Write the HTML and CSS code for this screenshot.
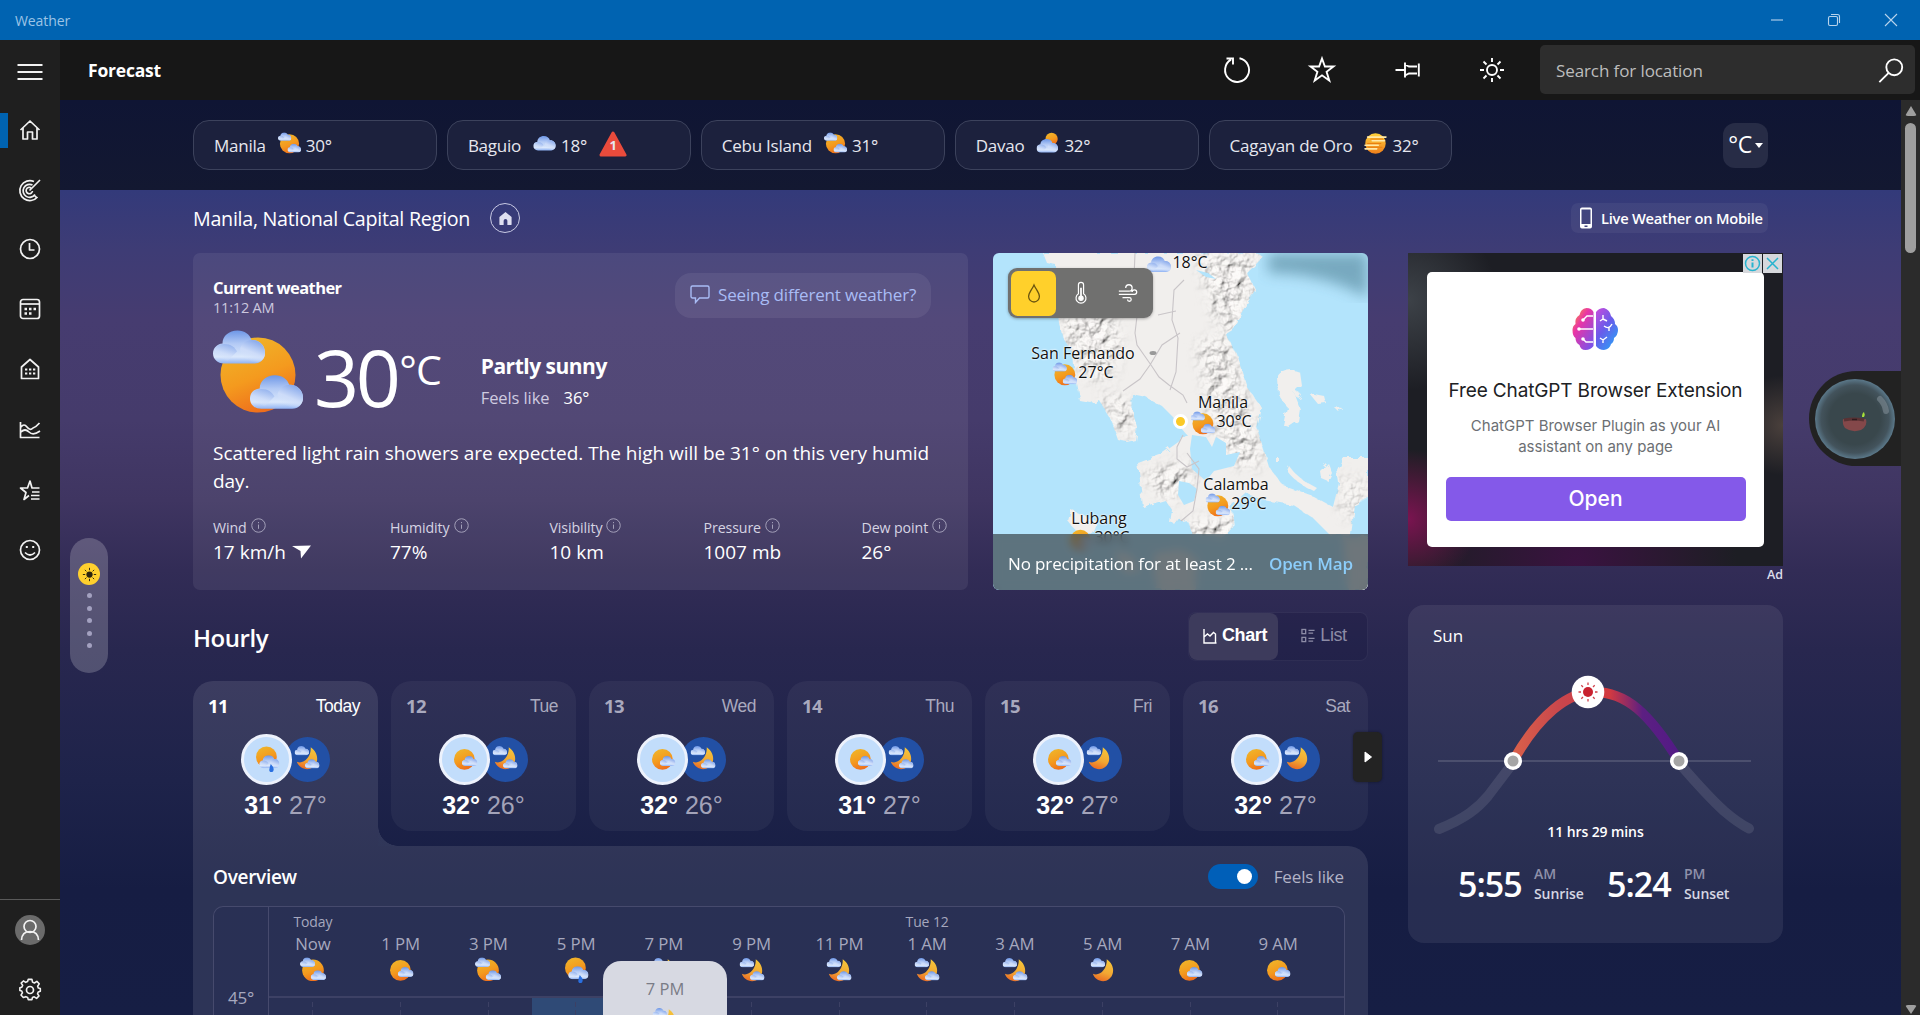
FILE: index.html
```html
<!DOCTYPE html>
<html lang="en">
<head>
<meta charset="utf-8">
<title>Weather</title>
<link rel="stylesheet" href="styles.css">
</head>
<body>
<svg class="defs" aria-hidden="true">
  <defs>
    <linearGradient id="gSun" x1="0.2" y1="0" x2="0.6" y2="1"><stop offset="0" stop-color="#efb62b"/><stop offset="0.55" stop-color="#f49a1e"/><stop offset="1" stop-color="#ee6c1c"/></linearGradient>
    <linearGradient id="gMoon" x1="0.7" y1="0" x2="0.4" y2="1"><stop offset="0" stop-color="#f5c63a"/><stop offset="0.6" stop-color="#f2a733"/><stop offset="1" stop-color="#ea6d25"/></linearGradient>
    <linearGradient id="gCloud" x1="0" y1="0" x2="0" y2="1"><stop offset="0" stop-color="#6d96e6"/><stop offset="0.4" stop-color="#b3caf5"/><stop offset="0.8" stop-color="#dbe8fc"/><stop offset="1" stop-color="#8fb2f3"/></linearGradient>
    <linearGradient id="gLobe" x1="0.7" y1="0" x2="0.3" y2="0.9"><stop offset="0" stop-color="#84a6ea"/><stop offset="0.6" stop-color="#cddcf9"/><stop offset="1" stop-color="#d6e4fb" stop-opacity="0"/></linearGradient>
    <linearGradient id="gHaze" x1="0" y1="0" x2="0" y2="1"><stop offset="0" stop-color="#ffd23c"/><stop offset="1" stop-color="#ef7f1b"/></linearGradient>
    <linearGradient id="gBrainL" x1="0" y1="0" x2="0.8" y2="1"><stop offset="0" stop-color="#ffa12b"/><stop offset="0.4" stop-color="#e935a6"/><stop offset="1" stop-color="#7c52e8"/></linearGradient>
    <linearGradient id="gBrainR" x1="0" y1="0" x2="0.7" y2="1"><stop offset="0" stop-color="#c94bdc"/><stop offset="0.5" stop-color="#6a5bea"/><stop offset="1" stop-color="#2f9bf5"/></linearGradient>
    <linearGradient id="gArc" gradientUnits="userSpaceOnUse" x1="105" y1="0" x2="271" y2="0"><stop offset="0" stop-color="#d9604a"/><stop offset="0.3" stop-color="#c9454c"/><stop offset="0.58" stop-color="#d33a40"/><stop offset="0.78" stop-color="#5c1f82"/><stop offset="1" stop-color="#521a86"/></linearGradient>
  </defs>
  <symbol id="cloud" viewBox="0 0 52 33">
    <path fill="url(#gCloud)" d="M11 33C4.500 33 0 28.500 0 23C0 17.500 4 13.500 9.500 13C9.500 5.500 16 0 24.500 0C31.500 0 37 4 38.500 9.500C46.500 9 52 15 52 22.500C52 28.500 47.500 33 41.500 33Z"/>
    <path fill="url(#gLobe)" d="M27 20C27 14 33 9.500 39 9.500C46.500 9.500 52 15.500 52 22C52 28 48 32 42 32H34Z"/>
    <path fill="url(#gLobe)" opacity=".7" d="M1 22C1 17 5 13.500 11 13.500C18 13.500 22 17 24 21L14 31Z"/>
  </symbol>
  <symbol id="partly" viewBox="0 0 90 90">
    <circle cx="45" cy="46" r="37.500" fill="url(#gSun)"/>
    <use href="#cloud" x="0" y="1" width="52" height="34"/>
    <use href="#cloud" x="37" y="46" width="53" height="34"/>
  </symbol>
  <symbol id="mostly" viewBox="0 0 90 90">
    <circle cx="43" cy="46" r="36" fill="url(#gSun)"/>
    <use href="#cloud" x="34" y="34" width="54" height="36"/>
  </symbol>
  <symbol id="rain" viewBox="0 0 90 90">
    <circle cx="43" cy="38" r="36" fill="url(#gSun)"/>
    <use href="#cloud" x="18" y="32" width="70" height="45"/>
    <path d="M58 62q15 15 8 26q-9 7-13-3q-1-7 5-23z" fill="#2a6fe0"/>
  </symbol>
  <symbol id="moon" viewBox="0 0 90 90">
    <path fill="url(#gMoon)" d="M58 8C88 28 88 70 56 82C36 88 15 76 10 58C32 68 60 44 58 8Z"/>
    <use href="#cloud" x="2" y="3" width="50" height="33"/>
    <use href="#cloud" x="38" y="48" width="50" height="34"/>
  </symbol>
  <symbol id="moon1" viewBox="0 0 90 90">
    <path fill="url(#gMoon)" d="M58 8C88 28 88 70 56 82C36 88 15 76 10 58C32 68 60 44 58 8Z"/>
    <use href="#cloud" x="2" y="3" width="50" height="33"/>
  </symbol>
  <symbol id="cloudy" viewBox="0 0 90 90"><use href="#cloud" x="1" y="14" width="88" height="60"/></symbol>
  <symbol id="mcloud" viewBox="0 0 90 90">
    <circle cx="61" cy="27" r="24" fill="url(#gSun)"/>
    <use href="#cloud" x="2" y="26" width="84" height="56"/>
  </symbol>
  <symbol id="haze" viewBox="0 0 90 90">
    <circle cx="45" cy="45" r="40" fill="url(#gHaze)"/>
    <path d="M14 20H86M32 34H80M4 52H56M4 66H50" stroke="#ffe9a8" stroke-width="6" stroke-linecap="round"/>
    <path d="M26 27H74M14 45H66M18 60H70" stroke="#e87f10" stroke-width="4" stroke-linecap="round"/>
  </symbol>
  <symbol id="info" viewBox="0 0 16 16"><circle cx="8" cy="8" r="7.200" fill="none" stroke="currentColor"/><path d="M8 7v4.500M8 4.300v1.200" stroke="currentColor"/></symbol>
  <symbol id="rays" viewBox="0 0 24 24"><g stroke="currentColor" stroke-width="1.500" stroke-linecap="round"><path d="M12 2v2.500M12 19.500V22M2 12h2.500M19.500 12H22M5 5l1.600 1.600M17.400 17.400 19 19M5 19l1.600-1.600M17.400 6.600 19 5"/></g><circle cx="12" cy="12" r="5" fill="currentColor"/></symbol>
</svg>

<header class="titlebar">
  <span class="app-name">Weather</span>
  <div class="win-controls">
    <svg viewBox="0 0 14 14"><path d="M1 7h12"/></svg>
    <svg viewBox="0 0 14 14"><rect x="1.500" y="3.500" width="9" height="9" rx="1.500"/><path d="M4 1.500h6.500a2 2 0 0 1 2 2V10"/></svg>
    <svg viewBox="0 0 14 14"><path d="M1 1l12 12M13 1L1 13"/></svg>
  </div>
</header>

<div class="shell">
  <nav class="rail">
    <a class="rail-item menu"><svg viewBox="0 0 26 26"><path d="M.5 6h25M.5 13h25M.5 20h25" stroke-width="2"/></svg></a>
    <a class="rail-item active"><svg viewBox="0 0 26 26"><path d="M3.500 13 13 4l9.500 9M6 11v11h4.500v-7h5v7H20V11"/></svg></a>
    <a class="rail-item"><svg viewBox="0 0 26 26"><path d="M17 4.500A10 10 0 1 0 20.500 20M15.500 8A6.500 6.500 0 1 0 18 17.500M14 10.800A3.200 3.200 0 1 0 15.500 14M12.500 13.500 23 3M20 21l-3-3"/></svg></a>
    <a class="rail-item lift"><svg viewBox="0 0 26 26"><circle cx="13" cy="13" r="9.500"/><path d="M12.500 7v7h5"/></svg></a>
    <a class="rail-item lift"><svg viewBox="0 0 26 26"><rect x="3.500" y="3.500" width="19" height="19" rx="2.500"/><path d="M3.500 8h19"/><path d="M7.500 13h2.500M12 13h2.500M16.500 13h2.500M7.500 17.500h2.500M12 17.500h2.500" stroke-width="2.500"/></svg></a>
    <a class="rail-item lift"><svg viewBox="0 0 26 26"><path d="M4.500 22.500V11L13 3.500l8.500 7.500v11.500z"/><path d="M8 13.500h2.300M12 13.500h2.300M16 13.500h2.300M8 17.500h2.300M12 17.500h2.300M16 17.500h2.300" stroke-width="2.200"/></svg></a>
    <a class="rail-item"><svg viewBox="0 0 26 26"><path d="M3.500 5v15.500h19M4 10q3-4 6 0t6 1q3-1 6.500-5M4 15q4-4 8 0t11-1"/></svg></a>
    <a class="rail-item"><svg viewBox="0 0 26 26"><path d="M22.500 11H15L13 4l-2.500 7H3.500l5.500 4.500-2 7 5-4M15 15h7.500M14 18.500h8.500M14 22h8.500"/></svg></a>
    <a class="rail-item"><svg viewBox="0 0 26 26"><circle cx="13" cy="13" r="9.500"/><path d="M8 15.500q5 5 10 0"/><path d="M8.800 10h2M15.200 10h2" stroke-width="2.200"/></svg></a>
    <div class="rail-foot">
      <a class="rail-item"><span class="avatar"><svg viewBox="0 0 30 30"><circle cx="15" cy="11.500" r="6"/><path d="M6.500 25q.5-8.500 8.500-8.500t8.500 8.500"/></svg></span></a>
      <a class="rail-item"><svg viewBox="0 0 26 26"><path d="M11 3.500h4l.6 3 2 .9 2.700-1.700 2.500 2.600-1.700 2.600.8 2 2.100.5v3l-2.200.6-.8 2 1.600 2.300-2.600 2.600-2.500-1.600-2 .8-.5 2.200h-4l-.6-2.300-2-.9L5.700 23 3.200 20.400l1.600-2.500-.8-1.900-2-.5v-3l2.100-.6.9-2L3.400 7.600l2.400-2.400 2.500 1.500 2-.8z" transform="translate(1 -.9) scale(.93)"/><circle cx="13" cy="13" r="3.500"/></svg></a>
    </div>
  </nav>

  <div class="body">
    <div class="cmdbar">
      <h1>Forecast</h1>
      <div class="cmds">
        <svg viewBox="0 0 30 30"><path d="M17.500 3.200A12 12 0 1 1 9 4.600M4.500 3.500h6.500v6"/></svg>
        <svg viewBox="0 0 30 30"><path d="M15 3.500l2.900 8H26.500l-6.900 5.300 2.700 8.700L15 20.300 7.700 25.500l2.700-8.700L3.500 11.500h8.600z"/></svg>
        <svg viewBox="0 0 30 30"><path d="M2.500 15H12M12 7.500v15M12 9.500l4 2h8M12 20.500l4-2h8M25.800 8.500v13" transform="translate(1 0)"/></svg>
        <svg viewBox="0 0 30 30"><circle cx="15" cy="15" r="5"/><path d="M15 3v4M15 23v4M3 15h4M23 15h4M6.500 6.500l3 3M20.500 20.500l3 3M6.500 23.500l3-3M20.500 9.500l3-3"/></svg>
      </div>
      <div class="search"><span>Search for location</span><svg viewBox="0 0 30 30"><circle cx="18.500" cy="11" r="8.500"/><path d="M12.500 17 2.500 27"/></svg></div>
    </div>

    <div class="viewport">
      <div class="page">
        <div class="cities">
          <div class="chip"><span>Manila</span><svg><use href="#partly"/></svg><b>30°</b></div>
          <div class="chip"><span>Baguio</span><svg><use href="#cloudy"/></svg><b>18°</b><i class="alert"><svg viewBox="0 0 28 26"><path d="M14 2 26 24H2Z" fill="#e94b3c" stroke="#e94b3c" stroke-width="3" stroke-linejoin="round"/></svg><em>1</em></i></div>
          <div class="chip"><span>Cebu Island</span><svg><use href="#partly"/></svg><b>31°</b></div>
          <div class="chip"><span>Davao</span><svg><use href="#mcloud"/></svg><b>32°</b></div>
          <div class="chip"><span>Cagayan de Oro</span><svg><use href="#haze"/></svg><b>32°</b></div>
          <div class="unit">°C<svg viewBox="0 0 8 6"><path d="M0 0h8L4 5z" fill="#fff"/></svg></div>
        </div>

        <div class="place">
          <span class="place-name">Manila, National Capital Region</span>
          <span class="home-ring"><svg viewBox="0 0 16 16"><path d="M8 1 1.500 6.500V14a1 1 0 0 0 1 1H6v-4.500a2 2 0 0 1 4 0V15h3.500a1 1 0 0 0 1-1V6.500z" fill="#dfdff0"/></svg></span>
          <a class="mobile"><svg viewBox="0 0 14 22"><path fill="#fff" fill-rule="evenodd" d="M3 .5h8A2 2 0 0 1 13 2.500v17a2 2 0 0 1-2 2H3a2 2 0 0 1-2-2v-17A2 2 0 0 1 3 .5zM2.500 2.500v14.500h9V2.500zM5.500 18.500v1.500h3v-1.500z"/></svg>Live Weather on Mobile</a>
        </div>

        <div class="columns">
          <main class="left">
            <div class="top-row">
              <section class="current">
                <div class="cur-head">
                  <div><h2>Current weather</h2><p>11:12 AM</p></div>
                  <a class="feedback"><svg viewBox="0 0 20 19"><path d="M2.500 1h15A1.500 1.500 0 0 1 19 2.500v9a1.500 1.500 0 0 1-1.500 1.500H9.500L5.500 17.500V13h-3A1.500 1.500 0 0 1 1 11.500v-9A1.500 1.500 0 0 1 2.500 1z"/></svg><span>Seeing different weather?</span></a>
                </div>
                <div class="cur-main">
                  <svg class="big-icon"><use href="#partly"/></svg>
                  <span class="temp">30</span><span class="deg">°C</span>
                  <div class="cond"><strong>Partly sunny</strong><p>Feels like <b>36°</b></p></div>
                </div>
                <p class="summary">Scattered light rain showers are expected. The high will be 31° on this very humid day.</p>
                <div class="metrics">
                  <div><label>Wind<svg><use href="#info"/></svg></label><b>17 km/h<svg class="wind" viewBox="0 0 20 14"><path d="M0 1 19 .5 9 13.500 8.500 6z" fill="#fff"/></svg></b></div>
                  <div><label>Humidity<svg><use href="#info"/></svg></label><b>77%</b></div>
                  <div><label>Visibility<svg><use href="#info"/></svg></label><b>10 km</b></div>
                  <div><label>Pressure<svg><use href="#info"/></svg></label><b>1007 mb</b></div>
                  <div><label>Dew point<svg><use href="#info"/></svg></label><b>26°</b></div>
                </div>
              </section>

              <section class="map">
                <svg class="terrain" viewBox="0 0 375 337">
                  <defs>
                    <filter id="relief" x="0" y="0" width="100%" height="100%">
                      <feTurbulence type="fractalNoise" baseFrequency="0.09" numOctaves="4" seed="8" result="n"/>
                      <feDiffuseLighting in="n" surfaceScale="6" diffuseConstant="1.140" lighting-color="#f4f2f0"><feDistantLight azimuth="225" elevation="58"/></feDiffuseLighting>
                    </filter>
                    <filter id="soft"><feGaussianBlur stdDeviation="7"/></filter>
                    <filter id="edge" x="-5%" y="-5%" width="110%" height="110%"><feTurbulence type="fractalNoise" baseFrequency="0.120" numOctaves="2" seed="3"/><feDisplacementMap in="SourceGraphic" scale="7"/></filter>
                    <clipPath id="land"><path d="M50 0L54 10L63 12L64 50L66 70L70 85L80 100L82 125L87 148L98 150L106 147L117 165L121 175L125 187L134 189L142 187L144 174L139 157L140 142L154 145L170 154L180 164L187 174L194 182L184 190L167 202L145 210L147 227L150 254L162 250L172 247L179 257L177 270L194 267L200 282L230 284L242 272L238 253L252 240L270 247L300 252L320 265L337 282H358L362 252L375 245V204L350 204L344 217L346 230L340 254L320 243L290 232L276 214L264 175L269 155L254 134L243 100L232 80L240 75L250 57L262 37L254 20L270 4L264 0Z"/></clipPath>
                    <mask id="hills"><g fill="#fff" filter="url(#soft)"><path d="M68 40h40l20 45-10 40-25 0-22-45z"/><path d="M205 0h60l-8 50-15 35-20-20z"/><path d="M205 90l30-8 20 70 15 60-30 0-20-40z"/><path d="M108 140l30 10 5 35-20-10z"/><path d="M150 220l40-10 15 15-30 25z"/><path d="M190 270l60-10 20 40-60 10z"/><path d="M345 225h30v40h-25z" opacity=".6"/></g></mask>
                  </defs>
                  <rect width="375" height="337" fill="#b3e4fc"/>
                  <g fill="#f1efed" filter="url(#edge)">
                    <path d="M50 0L54 10L63 12L64 50L66 70L70 85L80 100L82 125L87 148L98 150L106 147L117 165L121 175L125 187L134 189L142 187L144 174L139 157L140 142L154 145L170 154L180 164L187 174L194 182L184 190L167 202L145 210L147 227L150 254L162 250L172 247L179 257L177 270L194 267L200 282L230 284L242 272L238 253L252 240L270 247L300 252L320 265L337 282H358L362 252L375 245V204L350 204L344 217L346 230L340 254L320 243L290 232L276 214L264 175L269 155L254 134L243 100L232 80L240 75L250 57L262 37L254 20L270 4L264 0Z"/>
                    <path d="M285 125q8-12 22-6l2 14-8 8 6 15-2 12-9 6-6-2 4-18-8-12z"/>
                    <path d="M302 138l6 3-2 4-5-3zM316 140l15 3 2 7-8 1zM341 154l8 1-3 4z"/>
                    <path d="M296 213q8 12 28 22l-3 3q-18-8-27-20zM327 218l8-8 4 10-4 8-7-3zM283 205h4v4h-4z"/>
                    <path d="M78 257l12 5 16 8-5 12-18-4-8-10zM120 298l18 4 10 16-16 2zM160 300l30-4 14 10v31h-40zM350 284h25v53h-20z"/>
                  </g>
                  <g clip-path="url(#land)"><g mask="url(#hills)"><rect width="375" height="290" filter="url(#relief)" opacity=".75"/></g></g>
                  <g fill="#b3e4fc"><path d="M199 182l14 2 6 10 4-10 10 6 0 12 14-3-6 14-20 5-8 10-14-12-2-20z"/><path d="M186 228l10 2 8 6-3 12-10 4-6-10z"/><path d="M203 17l12 3 8 6-10-2z"/></g>
                  <g fill="none" stroke="#c9c5c8" stroke-width="1.100"><path d="M142 0l-1 25 4 30-3 25 2 12 14 20 8 12 10 8 14 10 4 8M191 27l-10 10-2 30 6 18-2 34-6 18M187 80l-18 12-12 20-10 14-17 12M183 58l-18 4M190 182l-6 12 0 12 10 8 12-6M194 200l12 16-2 20-4 22-12 10"/></g>
                  <ellipse cx="160" cy="100" rx="3.500" ry="2" fill="#999"/>
                  <path d="M275 0H375V45Q330 20 275 20Z" fill="#3e6f84" opacity=".5" filter="url(#soft)"/>
                </svg>
                <div class="pin p0"><svg><use href="#cloudy"/></svg>18°C</div>
                <div class="pin p1"><span>San Fernando</span><div><svg><use href="#partly"/></svg>27°C</div></div>
                <div class="pin p2"><span>Manila</span><div><svg><use href="#partly"/></svg>30°C</div></div>
                <div class="pin p3"><span>Calamba</span><div><svg><use href="#partly"/></svg>29°C</div></div>
                <div class="pin p4"><span>Lubang</span><div><svg><use href="#mostly"/></svg>30°C</div></div>
                <i class="here"></i>
                <div class="layers">
                  <span class="on"><svg viewBox="0 0 20 24"><path d="M10 3C8 8 4 11.500 4 16a6 6 0 0 0 12 0C16 11.500 12 8 10 3z"/></svg></span>
                  <span><svg viewBox="0 0 14 28"><path d="M4 15V4.500a3 3 0 0 1 6 0V15a5.800 5.800 0 1 1-6 0z"/><path d="M7 8v10" stroke-width="2"/><circle cx="7" cy="20" r="2.500" fill="#fff"/></svg></span>
                  <span><svg viewBox="0 0 24 20"><path d="M2 8h11a3.500 3.500 0 1 0-3.500-3.500M2 11.500h17a2.500 2.500 0 1 0-2.500-2.500M6 15h7.500a2 2 0 1 1-2 2"/></svg></span>
                </div>
                <div class="map-foot"><span>No precipitation for at least 2 ...</span><a>Open Map</a></div>
              </section>
            </div>

            <div class="hourly-head">
              <h2>Hourly</h2>
              <div class="switch">
                <span class="on"><svg viewBox="0 0 14 16"><path d="M1 1v14h12.500M1 9l3.500-3 2.500 2 3.500-3.500 2 1.500v9"/></svg>Chart</span>
                <span><svg viewBox="0 0 15 16"><rect x="1" y="1" width="4" height="4.500"/><rect x="1" y="9.500" width="4" height="4.500"/><path d="M8 2h6.500M8 5h5M8 10.500h6.500M8 13.500h5"/></svg>List</span>
              </div>
            </div>

            <div class="days">
              <div class="day today"><div class="d"><b>11</b><span>Today</span></div><div class="ic"><i><svg><use href="#rain"/></svg></i><i class="n"><svg><use href="#moon"/></svg></i></div><div class="t"><b>31°</b> 27°</div></div>
              <div class="day"><div class="d"><b>12</b><span>Tue</span></div><div class="ic"><i><svg><use href="#mostly"/></svg></i><i class="n"><svg><use href="#moon"/></svg></i></div><div class="t"><b>32°</b> 26°</div></div>
              <div class="day"><div class="d"><b>13</b><span>Wed</span></div><div class="ic"><i><svg><use href="#mostly"/></svg></i><i class="n"><svg><use href="#moon"/></svg></i></div><div class="t"><b>32°</b> 26°</div></div>
              <div class="day"><div class="d"><b>14</b><span>Thu</span></div><div class="ic"><i><svg><use href="#mostly"/></svg></i><i class="n"><svg><use href="#moon"/></svg></i></div><div class="t"><b>31°</b> 27°</div></div>
              <div class="day"><div class="d"><b>15</b><span>Fri</span></div><div class="ic"><i><svg><use href="#mostly"/></svg></i><i class="n"><svg><use href="#moon1"/></svg></i></div><div class="t"><b>32°</b> 27°</div></div>
              <div class="day"><div class="d"><b>16</b><span>Sat</span></div><div class="ic"><i><svg><use href="#mostly"/></svg></i><i class="n"><svg><use href="#moon1"/></svg></i></div><div class="t"><b>32°</b> 27°</div></div>
              <a class="next"><svg viewBox="0 0 8 12"><path d="M1 1v10l6.500-5z" fill="#fff" stroke="#fff" stroke-linejoin="round"/></svg></a>
            </div>

            <section class="overview">
              <div class="ov-head"><h3>Overview</h3><i class="toggle"></i><span>Feels like</span></div>
              <div class="chart">
                <div class="axis">45°</div>
                <div class="plot">
                  <div class="hours">
                    <div><small>Today</small><span>Now</span><svg><use href="#partly"/></svg></div>
                    <div><small></small><span>1 PM</span><svg><use href="#mostly"/></svg></div>
                    <div><small></small><span>3 PM</span><svg><use href="#partly"/></svg></div>
                    <div><small></small><span>5 PM</span><svg><use href="#rain"/></svg></div>
                    <div><small></small><span>7 PM</span><svg><use href="#moon"/></svg></div>
                    <div><small></small><span>9 PM</span><svg><use href="#moon"/></svg></div>
                    <div><small></small><span>11 PM</span><svg><use href="#moon"/></svg></div>
                    <div><small>Tue 12</small><span>1 AM</span><svg><use href="#moon"/></svg></div>
                    <div><small></small><span>3 AM</span><svg><use href="#moon"/></svg></div>
                    <div><small></small><span>5 AM</span><svg><use href="#moon1"/></svg></div>
                    <div><small></small><span>7 AM</span><svg><use href="#mostly"/></svg></div>
                    <div><small></small><span>9 AM</span><svg><use href="#mostly"/></svg></div>
                  </div>
                  <div class="grid"><i></i><i></i><i></i><i class="rainy"></i><i class="rainy"></i><i></i><i></i><i></i><i></i><i></i><i></i><i></i></div>
                </div>
                <div class="tip">7 PM<svg><use href="#moon"/></svg></div>
              </div>
            </section>
          </main>

          <aside class="right">
            <div class="ad">
              <div class="ad-ctl"><svg viewBox="0 0 19 19"><circle cx="9.500" cy="9.500" r="7"/><path d="M9.500 8.500v5M9.500 5.200v1.800" stroke-width="2"/></svg><svg viewBox="0 0 19 19"><path d="M4 4l11 11M15 4 4 15"/></svg></div>
              <div class="ad-card">
                <svg class="brain" viewBox="0 0 46 42"><path fill="url(#gBrainL)" d="M21.500 4v34q-3 4-8 4-5 0-6-5-4-2-4-7-3-2-3-8 0-4 3-6-1-6 4-9 1-6 7-7 5 0 7 4z"/><path fill="url(#gBrainR)" d="M24 4v34q3 4 8 4 6-1 7-6 3-2 3-6 4-3 4-8 0-4-3-6 0-5-4-8-1-6-7-8-5 0-8 4z"/><g fill="none" stroke="#fff" stroke-width="1.400"><path d="M21 8h-6l-4 4M21 21H7M21 34h-7l-3-3M28 13l3-2V7M31 11l4 2M32 18q5 4 8-2M37 19v4M28 30l3 2 4-3M31 32v3"/></g><g fill="#fff"><circle cx="11" cy="12" r="1.800"/><circle cx="7" cy="21" r="1.800"/><circle cx="11" cy="31" r="1.800"/></g></svg>
                <h4>Free ChatGPT Browser Extension</h4>
                <p>ChatGPT Browser Plugin as your AI assistant on any page</p>
                <a class="open">Open</a>
              </div>
            </div>
            <div class="ad-label">Ad</div>
            <section class="sun">
              <h3>Sun</h3>
              <svg class="arc" viewBox="0 0 375 170">
                <path d="M30 108H343" stroke="#fff" stroke-opacity=".28"/>
                <g fill="none" stroke-width="10" stroke-linecap="round"><path d="M31 176C58 165 70 155 80 143L105 110M271 110C290 132 305 148 316 158Q330 170 341 175.500" stroke="#fff" stroke-opacity=".1"/><path d="M105 108C131 62 160 39 186 39C218 39 241 60 271 108" stroke="url(#gArc)" stroke-linecap="butt"/></g>
                <circle cx="105" cy="108" r="9" fill="#fff"/><circle cx="105" cy="108" r="5.500" fill="#a5a5a5"/>
                <circle cx="271" cy="108" r="9" fill="#fff"/><circle cx="271" cy="108" r="5.500" fill="#a5a5a5"/>
                <circle cx="180" cy="39" r="16.300" fill="#fff"/>
                <circle cx="180" cy="39" r="5" fill="#c9222f"/><g stroke="#d0404a" stroke-width="1.300"><path d="M180 29.500v2.500M180 46v2.500M170.500 39h2.500M187 39h2.500M173.300 32.300l1.700 1.700M185 44l1.700 1.700M173.300 45.700 175 44M185 34l1.700-1.700"/></g>
              </svg>
              <p class="len">11 hrs 29 mins</p>
              <div class="times">
                <b>5:55</b><div><span>AM</span>Sunrise</div>
                <b class="set">5:24</b><div><span>PM</span>Sunset</div>
              </div>
            </section>
          </aside>
        </div>

        <div class="dots"><span><svg><use href="#rays"/></svg></span><i></i><i></i><i></i><i></i><i></i></div>
        <div class="bean"><div class="orb"><svg viewBox="0 0 80 80"><path d="M65 20q5 5 6 12" stroke="#7e8c94" stroke-width="6" stroke-linecap="round" fill="none" opacity=".6"/><path d="M28 40q12 2 23 0q2 7-5 11q-9 3-16-2q-3-4-2-9z" fill="#84484a"/><path d="M29 41q10-2 20 0" stroke="#5a3234" stroke-width="3" fill="none"/><path d="M37 40.500h5" stroke="#301a1e" stroke-width="1.500"/><path d="M47 38q0-4 2-5q1.500 3 0 5z" fill="#a7e23a"/></svg></div></div>
      </div>
      <div class="scroll"><i class="up"></i><i class="thumb"></i><i class="down"></i></div>
    </div>
  </div>
</div>
</body>
</html>
```
FILE: styles.css
```css
* { box-sizing: border-box; margin: 0; padding: 0; }
body { width: 1920px; height: 1015px; overflow: hidden; font-family: "Open Sans", "Noto Sans", sans-serif; color: #fff; background: #161d43; display: flex; flex-direction: column; }
h1, h2, h3, h4, b, strong { font-weight: 600; }
i, em { font-style: normal; }
svg { display: block; flex: none; }
.defs { position: absolute; width: 0; height: 0; }

.titlebar { height: 40px; flex: none; background: #0063b1; display: flex; align-items: center; justify-content: space-between; padding: 0 22px 0 15px; }
.app-name { font-size: 14px; color: #9cc4e6; letter-spacing: -.1px; }
.win-controls { display: flex; gap: 43px; }
.win-controls svg { width: 14px; height: 14px; fill: none; stroke: #b8d4ec; stroke-width: 1.1; }

.shell { flex: 1; min-height: 0; display: flex; }
.rail { width: 60px; flex: none; background: #1f1f1f; display: flex; flex-direction: column; padding-top: 2px; }
.rail-item { height: 60px; display: flex; align-items: center; justify-content: center; position: relative; }
.rail-item.menu { height: 58px; padding-top: 2px; }
.rail-item.lift { padding-bottom: 3px; }
.rail-item svg { width: 26px; height: 26px; fill: none; stroke: #f2f2f2; stroke-width: 1.7; stroke-linejoin: round; }
.rail-item.active::before { content: ""; position: absolute; left: 0; top: 13px; width: 8px; height: 35px; background: #0063b1; }
.rail-foot { margin-top: auto; height: 116px; border-top: 1px solid #5a5a5a; }
.rail-item .avatar { width: 30px; height: 30px; border-radius: 50%; background: #6b6b6b; }
.rail-item .avatar svg { width: 30px; height: 30px; }

.body { flex: 1; min-width: 0; display: flex; flex-direction: column; }
.cmdbar { height: 60px; flex: none; background: #171717; display: flex; align-items: center; padding: 0 5px 0 28px; }
.cmdbar h1 { font-size: 17.500px; font-weight: 700; letter-spacing: -.2px; }
.cmds { margin-left: auto; display: flex; gap: 55px; margin-right: 33px; }
.cmds svg { width: 30px; height: 30px; fill: none; stroke: #fff; stroke-width: 1.9; }
.search { width: 375px; height: 49px; margin-top: -2px; background: #2d2d2d; border-radius: 5px; display: flex; align-items: center; justify-content: space-between; padding: 3px 10px 0 16px; color: #bdbdbd; font-size: 17px; letter-spacing: -.1px; }
.search svg { width: 28px; height: 30px; fill: none; stroke: #fff; stroke-width: 2; }

.viewport { flex: 1; min-height: 0; display: flex; }
.page { position: relative; flex: 1; min-width: 0; overflow: hidden; background: linear-gradient(#333a7a 90px, #3e3c75 150px, #463c70 220px, #453b6b 320px, #3f3561 400px, #322c56 470px, #28274f 550px, #1e234a 680px, #161d43 790px, #161e44); }
.cities { height: 90px; padding: 20px 133px; background: linear-gradient(#0f1534, #131831); display: flex; gap: 10px; }
.chip { width: 243.900px; height: 50px; border: 1px solid #3c425c; border-radius: 16px; background: #1c213d; display: flex; align-items: center; padding: 1px 20px 0; font-size: 17px; letter-spacing: -.25px; color: #e6e7ef; }
.chip b { font-weight: 400; }
.chip > svg { width: 23px; height: 23px; margin: -4px 5px 0 12px; }
.alert { position: relative; width: 28px; height: 26px; margin: -4px 0 0 12px; }
.alert svg { width: 28px; height: 26px; }
.alert em { position: absolute; left: 0; right: 0; top: 5px; text-align: center; font-size: 13px; line-height: 18px; font-weight: 700; }
.unit { width: 45px; height: 45px; margin: 3px 0 0 auto; border-radius: 12px; background: #272c46; display: flex; align-items: center; justify-content: center; gap: 3px; font-size: 23px; letter-spacing: -.5px; padding-bottom: 4px; }
.unit svg { width: 8px; height: 6px; margin-top: 5px; }

.place { height: 63px; padding: 0 133px 7px; display: flex; align-items: center; }
.place-name { font-size: 19.700px; letter-spacing: -.28px; }
.home-ring { width: 30px; height: 30px; border: 1.500px solid #c9cae4; border-radius: 50%; margin-left: 20px; display: flex; align-items: center; justify-content: center; }
.home-ring svg { width: 15px; height: 15px; }
.mobile { margin-left: auto; width: 197px; height: 30px; border-radius: 7px; background: rgba(255,255,255,.05); display: flex; align-items: center; gap: 8px; padding-left: 8px; font-size: 14.700px; font-weight: 600; letter-spacing: -.25px; white-space: nowrap; }
.mobile svg { width: 14px; height: 22px; }

.columns { display: flex; gap: 40px; padding-left: 133px; }
.left { width: 1175px; flex: none; }
.right { width: 375px; flex: none; }
.top-row { display: flex; gap: 25px; height: 337px; }
.current { width: 775px; border-radius: 7px; background: rgba(255,255,255,.07); padding: 20px 20px 0; }
.cur-head { display: flex; justify-content: space-between; height: 50px; }
.cur-head h2 { font-size: 16.500px; font-weight: 700; letter-spacing: -.6px; line-height: 20px; margin-top: 5px; }
.cur-head p { font-size: 14.500px; line-height: 20px; color: #cbc7de; letter-spacing: -.2px; }
.feedback { width: 256px; height: 45px; margin-right: 17px; border-radius: 16px; background: rgba(255,255,255,.07); color: #a9bcf5; display: flex; align-items: center; padding: 0 0 2px 15px; gap: 8px; font-size: 17px; letter-spacing: -.17px; white-space: nowrap; }
.feedback svg { width: 20px; height: 19px; fill: none; stroke: #a9bcf5; stroke-width: 1.400; }
.cur-main { display: flex; height: 110px; }
.big-icon { width: 90px; height: 90px; margin-top: 6px; }
.temp { font-size: 79px; line-height: 108px; letter-spacing: -3.500px; margin-left: 11px; }
.deg { font-size: 41px; line-height: 56px; letter-spacing: -1px; margin: 18px 0 0 2px; }
.cond { margin-left: 40px; }
.cond strong { display: block; font-size: 21px; font-weight: 700; letter-spacing: -.5px; line-height: 28px; margin-top: 29px; }
.cond p { font-size: 16.500px; line-height: 22px; margin-top: 7px; color: #cfcbe0; letter-spacing: -.1px; }
.cond p b { font-weight: 400; color: #fff; margin-left: 10px; }
.summary { font-size: 19px; letter-spacing: -.03px; line-height: 28px; margin-top: 6px; height: 74px; }
.metrics { display: grid; grid-template-columns: 177px 159.500px 154px 158px 1fr; margin-right: -20px; }
.metrics label { display: flex; gap: 4px; font-size: 14.200px; letter-spacing: -.1px; line-height: 20px; margin-top: 5px; color: #d6d4e3; white-space: nowrap; }
.metrics label svg { width: 15px; height: 15px; color: #a9a5be; }
.metrics b { display: flex; align-items: center; gap: 6px; font-size: 19px; line-height: 28px; margin-top: 0; font-weight: 400; }
.metrics .wind { width: 20px; height: 14px; }

.map { position: relative; width: 375px; height: 337px; border-radius: 6px; overflow: hidden; color: #111; }
.terrain { position: absolute; inset: 0; width: 375px; height: 337px; }
.pin { position: absolute; transform: translateX(-50%); font-size: 16px; line-height: 18px; text-align: center; white-space: nowrap; text-shadow: 0 0 2px #fff, 0 0 2px #fff; }
.pin span { display: block; }
.pin div { display: flex; padding-top: 1px; }
.pin svg { width: 25px; height: 25px; margin: -1px 1px 0 0; }
.p0 { display: flex; left: 184px; top: 0; }
.p1 { left: 90px; top: 91px; } .p2 { left: 230px; top: 140px; } .p3 { left: 243px; top: 222px; } .p4 { left: 106px; top: 256px; }
.p1 div { margin-left: 21px; } .p2 div { margin-left: -4px; } .p3 div { margin-left: 2px; }
.here { position: absolute; left: 180px; top: 161px; width: 15px; height: 15px; border-radius: 50%; border: 3px solid #fff; background: #fbc926; }
.layers { position: absolute; left: 15px; top: 15px; width: 145px; height: 50px; border-radius: 9px; background: #70706f; display: flex; align-items: center; padding-left: 3px; gap: 2px; box-shadow: 0 1px 3px rgba(0,0,0,.3); }
.layers span { width: 45px; height: 45px; border-radius: 7px; display: flex; align-items: center; justify-content: center; }
.layers .on { background: #ffd02b; }
.layers svg { height: 24px; width: 22px; fill: none; stroke: #fff; stroke-width: 1.400; }
.layers .on svg { stroke: #6a5410; width: 18px; height: 22px; }
.map-foot { position: absolute; left: 0; right: 0; bottom: 0; height: 56px; background: rgba(64,76,82,.74); backdrop-filter: blur(4px); display: flex; align-items: center; justify-content: space-between; padding: 2px 15px 0; color: #fff; font-size: 17px; letter-spacing: -.12px; white-space: nowrap; }
.map-foot a { color: #8ccdfa; font-weight: 600; }

.hourly-head { display: flex; justify-content: space-between; align-items: center; height: 49px; margin-top: 22px; }
.hourly-head h2 { font-size: 24px; letter-spacing: -.45px; padding-top: 1px; }
.switch { width: 180px; height: 49px; border: 1px solid rgba(255,255,255,.06); border-radius: 8px; background: rgba(10,10,50,.15); display: flex; font: 18px "Liberation Sans", Arial, sans-serif; letter-spacing: -.4px; }
.switch span { flex: 1; display: flex; align-items: center; justify-content: center; gap: 5px; color: #8d8ca6; padding: 0 0 2px 3px; }
.switch .on { color: #fff; font-weight: 700; background: #3d3b5c; border-radius: 8px; }
.switch svg { width: 14px; height: 16px; fill: none; stroke: currentColor; stroke-width: 1.400; }

.days { position: relative; display: flex; gap: 13px; height: 165px; margin-top: 20px; }
.day { width: 185px; height: 150px; border-radius: 20px; background: rgba(255,255,255,.048); padding: 13px 18px 0 15px; position: relative; font-family: "Liberation Sans", Arial, sans-serif; }
.day.today { height: 165px; border-radius: 20px 20px 0 0; background: rgba(255,255,255,.1); }
.day.today::after { content: ""; position: absolute; left: 100%; bottom: 0; width: 20px; height: 20px; background: radial-gradient(circle at 100% 0, transparent 19.500px, rgba(255,255,255,.1) 20px); }
.d { display: flex; justify-content: space-between; line-height: 24px; color: #a9a9be; font-size: 17.500px; letter-spacing: -.5px; }
.d b { font: 700 18.500px/24px "Open Sans", sans-serif; letter-spacing: -.5px; }
.today .d { color: #fff; }
.ic { display: flex; justify-content: center; align-items: center; height: 52px; margin: 15px -3px 0 0; }
.ic i { width: 51px; height: 51px; border-radius: 50%; border: 3.500px solid #edf2fc; background: #c2ddfb; display: flex; align-items: center; justify-content: center; position: relative; z-index: 1; }
.ic i.n { width: 45px; height: 45px; border: 0; background: #2250a5; margin: 0 0 0 -7px; z-index: 0; }
.ic svg { width: 26px; height: 26px; }
.ic .n svg { margin-left: -1px; margin-top: -2px; }
.t { text-align: center; font-size: 25px; line-height: 34px; margin: 3px -3px 0 0; color: #a3a3b9; }
.t b { color: #fff; font-weight: 700; }
.next { position: absolute; left: 1160px; top: 51px; width: 29px; height: 50px; border-radius: 5px; background: #232323; display: flex; align-items: center; justify-content: center; z-index: 2; box-shadow: 0 0 3px rgba(0,0,0,.4); }
.next svg { width: 8px; height: 12px; }

.overview { height: 200px; background: rgba(255,255,255,.1); border-radius: 0 20px 0 0; padding: 0 23px 0 20px; }
.ov-head { height: 60px; display: flex; align-items: center; padding: 1px 1px 0 0; }
.ov-head h3 { font-size: 19px; letter-spacing: -.3px; margin-right: auto; }
.toggle { width: 50px; height: 25px; border-radius: 13px; background: #005fb8; padding: 5px 6px; }
.toggle::after { content: ""; display: block; width: 15px; height: 15px; border-radius: 50%; background: #fff; margin-left: auto; }
.ov-head span { font-size: 17px; color: #b2b3c6; margin-left: 16px; letter-spacing: -.15px; }
.chart { position: relative; height: 140px; border: 1px solid #464a6d; border-bottom: 0; border-radius: 10px 10px 0 0; background: rgba(20,28,70,.12); display: flex; }
.axis { width: 56px; padding-top: 79px; text-align: center; font-size: 17px; letter-spacing: -.3px; color: #a6a8be; }
.plot { flex: 1; border-left: 1px solid #464a6d; }
.hours { display: flex; height: 91px; padding-right: 22px; border-bottom: 2px solid #3d4165; }
.hours div { width: 87.750px; display: flex; flex-direction: column; align-items: center; padding-top: 6px; }
.hours small { font-size: 14px; line-height: 18px; height: 18px; color: #a6a8be; letter-spacing: -.1px; }
.hours span { font-size: 16.800px; letter-spacing: -.15px; line-height: 22px; margin: 2px 0 2px; color: #a6a8be; white-space: nowrap; }
.hours svg { width: 26px; height: 26px; }
.grid { display: flex; }
.grid i { width: 87.750px; height: 48px; background: repeating-linear-gradient(#3c4064 0 5px, transparent 5px 8px) 43px 4px / 1px 44px no-repeat; }
.grid .rainy { background-color: #2f4a76; }
.tip { position: absolute; left: 389px; top: 54px; width: 124px; height: 100px; border-radius: 18px 18px 0 0; background: #d7d9e2; color: #7a7c86; font-size: 16.500px; line-height: 22px; padding-top: 17px; display: flex; flex-direction: column; align-items: center; }
.tip svg { width: 26px; height: 26px; margin-top: 7px; }

.ad { position: relative; height: 313px; padding: 19px 19px; background: radial-gradient(circle at 0 85%, #7a1450 0, rgba(122,20,80,0) 70px), radial-gradient(ellipse at 45% 100%, #3a1240 0, rgba(58,18,64,0) 160px), radial-gradient(circle at 100% 55%, #4a403c 0, rgba(60,52,50,0) 50px), radial-gradient(circle at 0 15%, #3d4248 0, rgba(61,66,72,0) 90px), #1d1e24; }
.ad-ctl { position: absolute; top: 1px; right: 1px; display: flex; gap: 1px; }
.ad-ctl svg { width: 19px; height: 19px; background: #d6d8dc; fill: none; stroke: #27b3cf; stroke-width: 1.500; }
.ad-card { height: 275px; background: #fff; border-radius: 5px; display: flex; flex-direction: column; align-items: center; padding: 36px 19px 0; font-family: Inter, sans-serif; color: #202124; text-align: center; }
.brain { width: 46px; height: 42px; margin-right: 2px; }
.ad-card h4 { font-weight: 400; font-size: 19px; letter-spacing: -.14px; line-height: 24px; margin-top: 29px; white-space: nowrap; }
.ad-card p { font-size: 15px; line-height: 21px; margin-top: 12px; color: #6c6f73; width: 260px; }
.open { width: 300px; height: 44px; margin-top: 20px; flex: none; border-radius: 5px; background: #8459e9; color: #fff; font-size: 21px; line-height: 44px; font-weight: 500; }
.ad-label { height: 39px; font-size: 12.500px; line-height: 17px; text-align: right; font-weight: 600; color: #dcdcea; }
.sun { height: 338px; border-radius: 16px; background: rgba(255,255,255,.075); }
.sun h3 { font-weight: 400; font-size: 17px; line-height: 24px; padding: 19px 0 0 25px; height: 48px; }
.arc { width: 375px; height: 170px; overflow: visible; }
.len { text-align: center; font-size: 14px; line-height: 18px; font-weight: 600; letter-spacing: -.1px; }
.times { display: flex; align-items: center; padding-left: 50px; height: 50px; margin-top: 18px; }
.times b { font-size: 34px; width: 64px; letter-spacing: -1px; margin-right: 12px; line-height: 50px; }
.times div { font-size: 14px; line-height: 20px; font-weight: 600; color: #d5d6e2; width: 50px; letter-spacing: -.1px; }
.times div span { display: block; color: #8f91aa; }
.times .set { margin-left: 23px; margin-right: 13px; }

.dots { position: absolute; left: 10px; top: 438px; width: 38px; height: 135px; border-radius: 19px; background: rgba(255,255,255,.2); display: flex; flex-direction: column; align-items: center; padding-top: 25px; }
.dots span { width: 22px; height: 22px; border-radius: 50%; background: #ffd02e; color: #2a2410; display: flex; align-items: center; justify-content: center; margin-bottom: 8px; }
.dots span svg { width: 15px; height: 15px; }
.dots i { width: 5px; height: 5px; border-radius: 50%; background: #a3a1c0; margin-bottom: 7.500px; }
.bean { position: absolute; right: 0; top: 271px; width: 92px; height: 95px; border-radius: 48px 0 0 48px; background: #222; padding: 8px 0 0 6px; }
.orb { width: 80px; height: 80px; border-radius: 50%; background: radial-gradient(#39474c 45%, #43535c 60%, #5c7a8c 71%); }

.scroll { position: relative; width: 19px; flex: none; background: #2b2b2b; display: flex; flex-direction: column; align-items: center; padding: 6px 0 1px; }
.scroll .thumb { width: 11px; height: 130px; border-radius: 6px; background: #9f9f9f; margin-top: 7px; }
.scroll .up { border: 6px solid transparent; border-top: 0; border-bottom: 10px solid #9f9f9f; border-radius: 3px; }
.scroll .down { border: 6px solid transparent; border-bottom: 0; border-top: 9px solid #9f9f9f; margin-top: auto; border-radius: 3px; }
```
